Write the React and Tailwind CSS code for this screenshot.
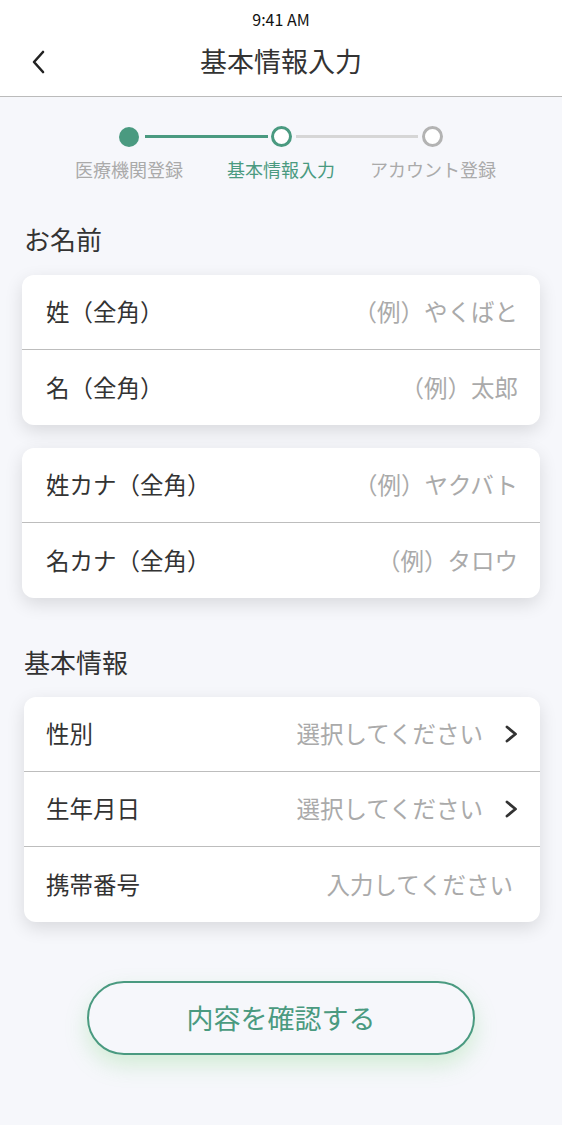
import React from 'react';

const GREEN = '#4a9a80';

const Chevron = () => (
  <svg width="14" height="20" viewBox="0 0 14 20" fill="none" className="ml-[21px]">
    <path d="M3 3l8.5 7-8.5 7" stroke="#333" strokeWidth="2.8" strokeLinecap="round" strokeLinejoin="round" />
  </svg>
);

const Row = ({ label, placeholder, arrow, last, pad, inset }) => (
  <div className={`h-[75px] flex items-center ${pad} pr-[22px] ${last ? '' : 'border-b border-[#bdbdbd]'}`}>
    <span className="text-[23.5px] text-[#333]">{label}</span>
    <span className={`ml-auto text-[23.5px] text-[#aaaaaa] ${inset ? 'mr-[5px]' : ''}`}>{placeholder}</span>
    {arrow && <Chevron />}
  </div>
);

const Card = ({ rows, className = '', pad = 'pl-[24px]' }) => (
  <div className={`bg-white rounded-[12px] shadow-[0_6px_18px_rgba(0,0,0,0.12)] overflow-hidden ${className}`}>
    {rows.map((r, i) => (
      <Row key={r.label} {...r} pad={pad} last={i === rows.length - 1} />
    ))}
  </div>
);

export default function App() {
  return (
    <div
      className="min-h-[1125px] bg-[#f6f7fb]"
      style={{ fontFamily: '"Noto Sans CJK JP", "Noto Sans", sans-serif' }}
    >
      <div className="bg-white border-b border-[#bbbbbb]">
        <div className="h-[36px] flex items-center justify-center text-[16px] text-[#111] pt-[1px]">9:41 AM</div>
        <div className="h-[60px] relative flex items-center justify-center">
          <svg width="16" height="26" viewBox="0 0 16 26" fill="none" className="absolute left-[31px] top-[13px]">
            <path d="M12 3L3 13l9 10" stroke="#222" strokeWidth="2.6" strokeLinecap="round" strokeLinejoin="round" />
          </svg>
          <span className="text-[27px] text-[#333] -mt-[10px]">基本情報入力</span>
        </div>
      </div>

      <div className="pt-[29px]">
        <div className="mx-auto w-[324px] flex items-center">
          <div className="w-[20px] h-[20px] rounded-full" style={{ backgroundColor: GREEN }} />
          <div className="flex-1 h-[3px] ml-[6px] mr-[3px]" style={{ backgroundColor: GREEN }} />
          <div className="w-[21px] h-[21px] rounded-full border-[3px] bg-white" style={{ borderColor: GREEN }} />
          <div className="flex-1 h-[3px] mx-[4px] bg-[#d6d6d6]" />
          <div className="w-[21px] h-[21px] rounded-full border-[3px] border-[#b3b3b3] bg-white" />
        </div>
        <div className="mx-auto w-[456px] grid grid-cols-3 mt-[9px] text-[18px] text-center">
          <span className="text-[#aaaaaa]">医療機関登録</span>
          <span style={{ color: GREEN }}>基本情報入力</span>
          <span className="text-[#aaaaaa]">アカウント登録</span>
        </div>
      </div>

      <div className="px-[22px]">
        <h2 className="mt-[38px] ml-[2px] text-[26px] text-[#333] leading-[36px]">お名前</h2>
        <Card
          className="mt-[18px]"
          rows={[
            { label: '姓（全角）', placeholder: '（例）やくばと' },
            { label: '名（全角）', placeholder: '（例）太郎' },
          ]}
        />
        <Card
          className="mt-[23px]"
          rows={[
            { label: '姓カナ（全角）', placeholder: '（例）ヤクバト' },
            { label: '名カナ（全角）', placeholder: '（例）タロウ' },
          ]}
        />
        <h2 className="mt-[46px] ml-[2px] text-[26px] text-[#333] leading-[36px]">基本情報</h2>
        <Card
          className="mt-[17px] ml-[2px]"
          pad="pl-[22px]"
          rows={[
            { label: '性別', placeholder: '選択してください', arrow: true },
            { label: '生年月日', placeholder: '選択してください', arrow: true },
            { label: '携帯番号', placeholder: '入力してください', inset: true },
          ]}
        />
      </div>

      <div className="flex justify-center mt-[59px] pb-[70px]">
        <button
          className="w-[388px] h-[74px] rounded-full border-2 bg-[#f6f7fb] text-[27px] shadow-[0_10px_22px_rgba(120,210,120,0.28)]"
          style={{ borderColor: GREEN, color: GREEN }}
        >
          内容を確認する
        </button>
      </div>
    </div>
  );
}
